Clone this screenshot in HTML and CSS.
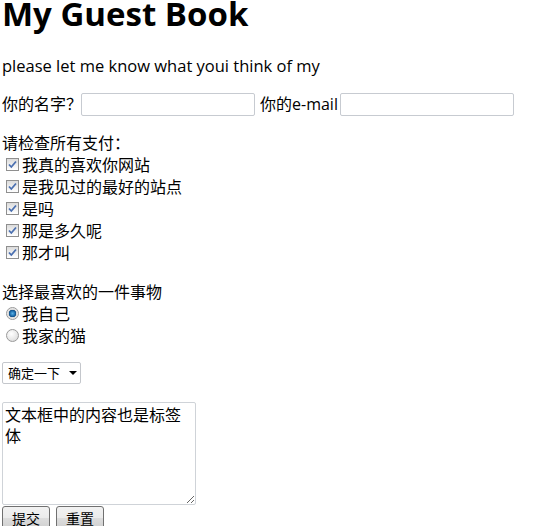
FILE: index.html
```html
<!DOCTYPE html>
<html lang="zh">
<head>
<meta charset="utf-8">
<title>My Guest Book</title>
<link rel="stylesheet" href="styles.css">
</head>
<body>
<h1 class="title">My Guest Book</h1>
<p class="intro">please let me know what youi think of my</p>
<form class="guest-form">
  <div class="field-row">
    <label class="lbl">你的名字？</label><input class="text-input" type="text">
    <label class="lbl lbl-gap">你的e-mail</label><input class="text-input" type="text">
  </div>
  <div class="group group-check">
    <div class="group-title">请检查所有支付：</div>
    <label class="opt"><input class="cb" type="checkbox" checked>我真的喜欢你网站</label>
    <label class="opt"><input class="cb" type="checkbox" checked>是我见过的最好的站点</label>
    <label class="opt"><input class="cb" type="checkbox" checked>是吗</label>
    <label class="opt"><input class="cb" type="checkbox" checked>那是多久呢</label>
    <label class="opt"><input class="cb" type="checkbox" checked>那才叫</label>
  </div>
  <div class="group group-radio">
    <div class="group-title">选择最喜欢的一件事物</div>
    <label class="opt"><input class="rb" type="radio" name="fav" checked>我自己</label>
    <label class="opt"><input class="rb" type="radio" name="fav">我家的猫</label>
  </div>
  <div class="select-row">
    <div class="select-box"><span class="select-text">确定一下</span><span class="select-arrow"></span></div>
  </div>
  <textarea class="message">文本框中的内容也是标签体</textarea>
  <div class="buttons">
    <button class="btn" type="submit">提交</button>
    <button class="btn" type="reset">重置</button>
  </div>
</form>
</body>
</html>
```
FILE: styles.css
```css
html, body {
  margin: 0;
  padding: 0;
  background: #fff;
  overflow: hidden;
}
body {
  padding: 0 2px;
  font-family: "Open Sans", "Noto Sans CJK SC", sans-serif;
  font-size: 16px;
  color: #000;
}
.title {
  margin: -5px 0 0 0;
  font-size: 33px;
  line-height: 38px;
  font-weight: 700;
  letter-spacing: 0;
}
.intro {
  margin: 22px 0 0 0;
  font-size: 16.5px;
  line-height: 22px;
}
.guest-form {
  margin: 0;
}
.field-row {
  margin-top: 16px;
  display: flex;
  align-items: center;
  height: 23px;
}
.lbl {
  font-family: "Open Sans", "Noto Sans CJK SC", sans-serif;
  line-height: 23px;
  margin-left: 0;
  flex: none;
}
.lbl-gap {
  margin-left: 5px;
  width: 81px;
}
.text-input {
  margin: 0 0 0 -1px;
  width: 174px;
  height: 23px;
  box-sizing: border-box;
  border: 1px solid #c7cbd1;
  border-radius: 2px;
  padding: 0 3px;
  background: #fff;
  flex: none;
}
.group {
  display: flex;
  flex-direction: column;
  font-family: "Noto Sans CJK SC", sans-serif;
}
.group-check {
  margin-top: 15px;
}
.group-radio {
  margin-top: 17px;
}
.group-title {
  line-height: 22px;
}
.opt {
  display: flex;
  align-items: center;
  height: 22px;
  line-height: 22px;
}
.cb, .rb {
  -webkit-appearance: none;
  appearance: none;
  width: 13px;
  height: 13px;
  margin: 0 3px 0 4px;
  box-sizing: border-box;
  flex: none;
}
.cb {
  border: 1px solid #8f8f8f;
  background-color: #f0f0f0;
  background-image: url("data:image/svg+xml;utf8,<svg xmlns='http://www.w3.org/2000/svg' width='11' height='11' viewBox='0 0 11 11'><path d='M2 5.5 L4.3 8 L9 2.5' fill='none' stroke='%234a6fb0' stroke-width='1.8'/></svg>"), linear-gradient(#dcdcdc, #ffffff);
  background-repeat: no-repeat;
}
.rb {
  border-radius: 50%;
  border: 1px solid #9a9a9a;
  background: radial-gradient(circle at 40% 35%, #ffffff 0, #e6e6e6 60%, #cfcfcf 100%);
}
.rb:checked {
  background: radial-gradient(circle at 50% 50%, #5ab0e6 0, #1f6fae 2.5px, #0e4c85 3.5px, #d8d8d8 4px, #f4f4f4 6px);
}
.select-row {
  margin-top: 16px;
  height: 22px;
}
.select-box {
  width: 79px;
  height: 22px;
  box-sizing: border-box;
  border: 1px solid #c4c7cc;
  border-radius: 2px;
  display: flex;
  align-items: center;
  font-family: "Noto Sans CJK SC", sans-serif;
  font-size: 13px;
  padding-left: 5px;
  position: relative;
}
.select-text {
  line-height: 20px;
}
.select-arrow {
  margin-left: 9px;
  width: 0;
  height: 0;
  border-left: 4px solid transparent;
  border-right: 4px solid transparent;
  border-top: 4px solid #000;
}
.message {
  display: block;
  margin-top: 18px;
  width: 194px;
  height: 103px;
  box-sizing: border-box;
  border: 1px solid #cfd3d8;
  border-radius: 2px;
  padding: 1px 2px;
  font-family: "Noto Sans CJK SC", sans-serif;
  font-size: 16px;
  line-height: 21px;
  resize: both;
}
.buttons {
  margin-top: 1px;
  display: flex;
  gap: 6px;
}
.btn {
  width: 48px;
  height: 24px;
  box-sizing: border-box;
  border: 1px solid #707070;
  border-radius: 3px;
  background: linear-gradient(#f2f2f2 0, #ebebeb 50%, #dddddd 50%, #cfcfcf 100%);
  font-family: "Noto Sans CJK SC", sans-serif;
  font-size: 14px;
  padding: 0;
  line-height: 20px;
  color: #000;
}
```
